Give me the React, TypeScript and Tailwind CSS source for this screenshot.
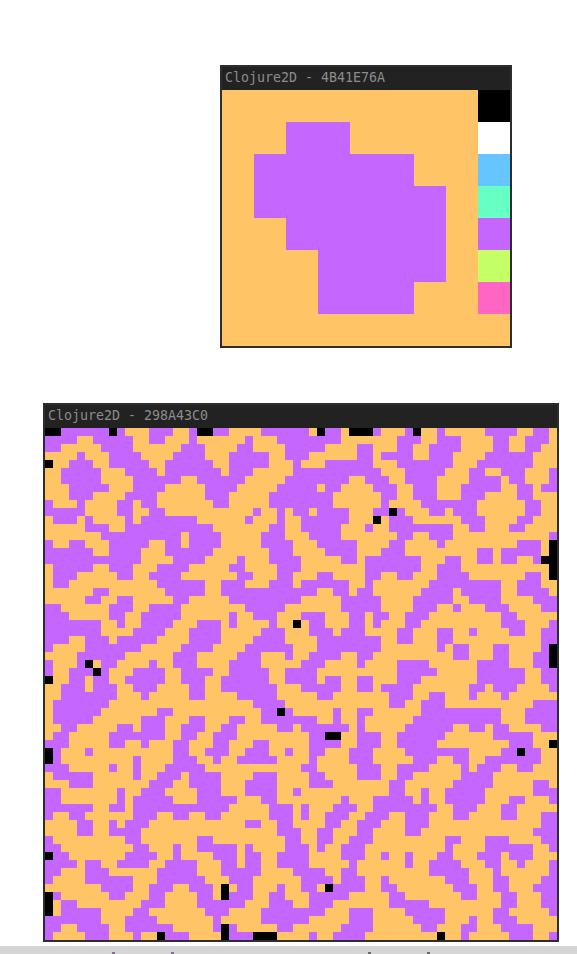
const ORANGE = '#ffc466'
const PURPLE = '#c466ff'

const swatches: Record<string, string> = {
  o: ORANGE,
  p: PURPLE,
  k: '#000000',
  w: '#ffffff',
  b: '#66c4ff',
  t: '#66ffc4',
  g: '#c4ff66',
  m: '#ff66c4',
}

// each row is a list of runs: colour letter + column where the run starts
const paletteRows = [
  'o0 k8',
  'o0 p2 o4 w8',
  'o0 p1 o6 b8',
  'o0 p1 o7 t8',
  'o0 p2 o7 p8',
  'o0 p3 o7 g8',
  'o0 p3 o6 m8',
  'o0',
]

const noiseRows = [
  'k0 p2 k8 p9 o10 p13 o16 p18 k19 p21 o23 p27 p32 o33 k34 p35 o37 k38 p41 o42 p45 k46 o47 p49 o50 p55 o59 p61 o63',
  'p0 o4 p6 o11 p13 o15 p18 o19 p25 o26 p29 p32 o37 p44 o47 p49 o52 p56 o58 p60 o63',
  'p0 o2 p7 o11 p17 o20 p24 o26 p30 p32 o35 p39 o41 p44 o46 p48 o52 p56 o58 p60 o62',
  'o0 p4 o5 p8 o12 p16 o20 p23 o28 p30 p32 o33 p39 o41 p42 o46 p48 o51 p55 o61',
  'k0 o1 p3 o6 p8 o13 p15 o21 p23 o28 p31 o32 p35 o41 p44 o51 p54 o61',
  'o0 p2 o7 p10 o14 p15 o22 p23 o26 p31 p32 o42 p45 o50 p53 o55 p57 o60 p63',
  'o0 p2 o7 p11 o17 p19 o25 p30 p32 o38 p40 o43 p45 o49 p53 o57 p58 o60 p63',
  'o0 p3 o8 p11 o15 p20 o24 p29 p32 o34 p35 o37 p41 o44 p46 o49 p52 o57 p59 o61 p62',
  'o0 p3 o6 p10 o14 p20 o23 p28 p32 o36 p42 o44 p46 o49 p52 o55 p59 o61',
  'p0 o1 p4 o5 p9 o11 p12 o14 p21 o23 p28 p32 o36 p42 o43 p47 o54 p60 o62',
  'p0 o5 p9 o11 p13 o15 p26 o27 p29 o30 p31 p32 o33 p34 o38 p41 k43 p44 o45 p48 o50 p51 o54 p60 o62',
  'o0 p1 o4 p5 o6 p10 o11 p12 o19 p25 o26 p29 o30 p32 o38 k41 o42 p43 o46 p52 o55 p59 o61',
  'o0 p5 o8 p10 o21 p28 o30 p32 o37 p40 o41 p43 o51 p53 o55 p58 o60',
  'o0 p7 o17 p18 o22 p27 o30 o32 p33 o37 p44 o46 p48 o51 p63',
  'p0 o1 p3 o5 p8 o13 p15 o17 p18 o22 p27 o31 o32 p34 o39 p43 o45 p49 o50 p59 o62 k63',
  'p0 o6 p8 o12 p15 o21 p28 o31 o32 p35 o39 p42 o45 p54 o56 p57 o62 k63',
  'p0 o12 p16 o20 p24 o25 p28 o32 p37 o39 p40 o47 p50 o52 p54 o56 p57 o59 p61 k62',
  'o0 p1 o6 p8 o11 p14 o18 p23 o25 p29 o32 p40 o47 p49 o52 o62 k63',
  'o0 p1 o4 p9 o11 p13 o17 p24 o26 p29 o31 o32 p34 o36 p40 o42 p44 o46 p49 o53 p60 o62 k63',
  'o0 p1 o3 p14 o20 p22 o25 p28 o31 p32 o38 p40 o41 p48 o57 p59 o62',
  'o0 p6 o8 p15 o20 p22 p32 o34 p36 o38 p39 o41 p47 o51 p52 o57 p59 o63',
  'o0 p5 o7 p9 o11 p16 o18 p23 o32 p37 o42 p46 o51 p53 o57 p61',
  'p0 o2 p8 o11 p13 o17 p25 o30 o32 p37 o42 p46 o49 p51 o52 p55 o58 p62',
  'p0 o3 p8 o10 p12 o17 p23 o24 p26 o29 p32 o35 p38 o40 p41 o43 p45 o48 p57 o59',
  'p0 o7 p9 o10 p12 o16 p19 o22 p23 o24 p28 o29 k31 o32 p33 o35 p38 o40 p41 o42 p45 o47 p57 o60 p63',
  'p0 o7 p11 o15 p18 o22 p27 o30 o32 p33 o36 p37 o40 p44 o46 p49 o51 p53 o54 p58 o60 p62',
  'p0 o3 p5 o8 p9 o14 p18 o22 p26 o30 o32 p34 o42 p44 o46 p49 o51 p62',
  'p0 o1 p5 o12 p17 o21 p25 o31 o32 p34 o42 p49 o50 p51 o53 p56 o58 p62 k63',
  'o0 p4 o10 p16 o19 p24 o27 p30 o31 o32 p33 o37 p39 o41 p51 o53 p56 o58 p61 k63',
  'p0 o1 p4 k5 o6 p7 o9 p13 o14 p16 o19 p23 o27 p32 o35 p39 o40 p44 o48 p54 o58 p61 k63',
  'p0 o1 p3 k6 p7 o8 p11 o15 p17 o21 p23 o28 p30 p32 o34 p44 o49 p54 o60 p62',
  'k0 o1 p3 o5 p6 o8 p10 o15 p17 o20 p22 o28 p30 p32 o34 p35 o37 p39 o41 p44 o47 p54 o60 p62',
  'o0 p2 o5 p6 o9 p11 o14 p18 o20 p22 o29 p32 o37 p39 o41 p42 o46 p53 o55 p56 o59 p63',
  'o0 p2 o9 p12 o13 p18 o20 p24 o29 o32 p34 o36 p43 o46 p48 o50 p53 o54 p57 o58',
  'o0 p1 o8 p26 o30 o32 p43 o45 p47 o50 p61',
  'o0 p1 o7 p14 o16 p27 k29 p30 o31 o32 p36 o37 p39 o41 p47 o57 p60',
  'o0 p1 o6 p12 o15 p18 o20 p23 o25 p27 p32 o34 p36 o37 p39 o40 p46 o57 p60',
  'o0 p2 o4 p9 o11 p12 o15 p17 o20 p22 o24 p29 o31 p32 o38 p39 o40 p45 o51 p53 o55 p56 o58 p62',
  'o0 p1 o3 p8 o15 p17 o19 p21 o24 o32 p33 k35 o37 p39 o42 p44 o50 p56 o61',
  'p0 o3 p8 o10 p12 o13 p16 o18 p21 o23 p26 o28 o32 p33 o37 p39 o42 p44 o49 p58 o61 k63',
  'k0 p1 o2 p5 o6 p16 o18 p20 o23 p25 o28 p30 o31 o32 p33 o35 p38 o41 p45 o53 p57 k59 p60 o62',
  'k0 p1 o2 p11 o12 p16 o19 p21 o22 p24 o29 o32 p33 o34 p38 o41 p46 o49 p51 o53 p55 o62',
  'p0 o3 p8 o9 p11 o12 p15 o20 p32 o34 p39 o42 p44 o48 p52 o53 p54 o57 p59 o61',
  'o0 p1 o6 p11 o12 p14 o17 p18 o22 p26 o29 o32 p33 o35 p39 o42 p44 o46 p52 o56',
  'o0 p3 o6 p13 o16 p18 o22 p25 o29 o32 p33 o36 p43 o45 p51 o56 p61 o63',
  'p0 o2 p9 o10 p12 o15 p19 o22 p25 o29 p31 o32 p43 o45 p47 o48 p50 o55 p61',
  'p0 o2 p9 o10 p11 o16 p19 o24 p27 o29 o32 p37 o38 p41 o46 p47 o48 p50 o55 p58 o60 p63',
  'p0 o6 p8 o10 p11 o23 p28 o31 p32 o33 p36 o39 p41 o49 p51 o54 p57 o59',
  'p0 o1 p3 o5 p11 o14 p16 o18 p20 o22 p28 o31 p32 o33 p35 o38 p40 o43 p45 o48 p51 o53 p57 o59 p62',
  'o0 p4 o6 p8 o9 p10 o13 p25 o27 p29 o31 o32 p35 o37 p39 o42 p45 o48 p62',
  'o0 p4 o6 p8 o12 p29 o32 p34 o36 p39 o41 p45 o47 p61',
  'p0 o1 p10 o12 p19 o21 p30 o32 p34 o36 p38 o41 p50 o52 p55 o58 p62',
  'p0 o2 p11 o13 p16 o17 p19 o24 p25 o26 p30 p32 o33 p34 o35 p37 o40 p50 o51 p55 o61 p63',
  'k0 p1 o3 p10 o14 p16 o17 p21 o24 p25 o27 p29 p32 o33 p37 o40 p42 o43 p45 o46 p49 o51 p54 o57 p58 o61',
  'p0 o4 p5 o7 p9 o13 p15 o19 p22 o24 p25 o27 p29 p32 o33 p38 o39 p45 o46 p48 o52 p55 o57 p59 o60 p63',
  'p0 o2 p5 o8 p14 o19 p22 o27 p31 p32 o35 p37 o39 p48 o53 p56 o57 p63',
  'p0 o1 p5 o11 p14 o20 p23 o26 p32 o36 p37 o40 p42 o43 p50 o53 p56 o58 p62',
  'o0 p7 o11 p13 o16 p18 o21 k22 o23 p24 o26 p29 o30 p32 o34 k35 p36 o40 p42 o44 p51 o54 p56 o58 p61',
  'k0 p1 o2 p8 o10 p13 o15 p19 o21 k22 p23 o26 p28 o30 o32 p33 o38 p43 o45 p52 o54 p57 o59 p62',
  'k0 o1 p2 o4 p12 o15 p19 o25 p28 o31 o32 p33 o36 p43 o48 p57 o59 p62',
  'k0 o1 p2 o7 p11 o13 p20 o23 p27 p32 o35 p38 o41 p45 o50 p56 o58 p63',
  'p0 o7 p10 o14 p21 o22 p27 p32 o33 p38 o41 p46 o50 p53 o54 p56 o59',
  'p0 o2 p4 o8 p10 o16 p21 k22 p23 o24 p29 o31 o32 p37 o41 p47 o49 p52 o54 p57 o61',
  'p0 o1 p5 o8 p11 o12 k14 p15 o18 k22 p23 k26 o29 o32 p33 o34 p36 o40 k49 o50 p52 o53 p58 o61 p63',
]

// one rect per run, so the cells stay crisp at any size
function Pixels({ rows, cols, cell }: { rows: string[]; cols: number; cell: number }) {
  return (
    <svg className="block" width={cols * cell} height={rows.length * cell} shapeRendering="crispEdges">
      {rows.map((row, y) => {
        const runs = row.split(' ').map((token) => ({ color: token[0], start: Number(token.slice(1)) }))
        return runs.map((run, i) => {
          const end = i + 1 < runs.length ? runs[i + 1].start : cols
          return (
            <rect
              key={`${y}-${i}`}
              x={run.start * cell}
              y={y * cell}
              width={(end - run.start) * cell}
              height={cell}
              fill={swatches[run.color]}
            />
          )
        })
      })}
    </svg>
  )
}

function CanvasWindow({ title, className = '', children }: { title: string; className?: string; children: React.ReactNode }) {
  return (
    <div className={`w-fit border-2 border-[#2d2d2d] bg-[#222222] ${className}`}>
      <div className="flex h-[23px] items-center px-[3px] pb-[2px] font-['DejaVu_Sans_Mono',monospace] text-[13.3px] text-[#8c8c8c]">
        {title}
      </div>
      {children}
    </div>
  )
}

const dockMarks = [
  { x: 112, color: 'bg-[#8a6a9a]' },
  { x: 171, color: 'bg-[#8a6a9a]' },
  { x: 368, color: 'bg-[#6a6a6a]' },
  { x: 427, color: 'bg-[#6a6a6a]' },
]

export default function App() {
  return (
    <div className="flex h-[954px] flex-col overflow-hidden bg-white pt-[65px]">
      <CanvasWindow title="Clojure2D - 4B41E76A" className="ml-[220px]">
        <Pixels rows={paletteRows} cols={9} cell={32} />
      </CanvasWindow>
      <CanvasWindow title="Clojure2D - 298A43C0" className="ml-[43px] mt-[55px]">
        <Pixels rows={noiseRows} cols={64} cell={8} />
      </CanvasWindow>
      <div className="relative mt-[4px] h-[8px] w-full bg-[#d6d6d6]">
        {dockMarks.map((mark) => (
          <span key={mark.x} className={`absolute bottom-0 h-[2px] w-[3px] ${mark.color}`} style={{ left: mark.x }} />
        ))}
      </div>
    </div>
  )
}
